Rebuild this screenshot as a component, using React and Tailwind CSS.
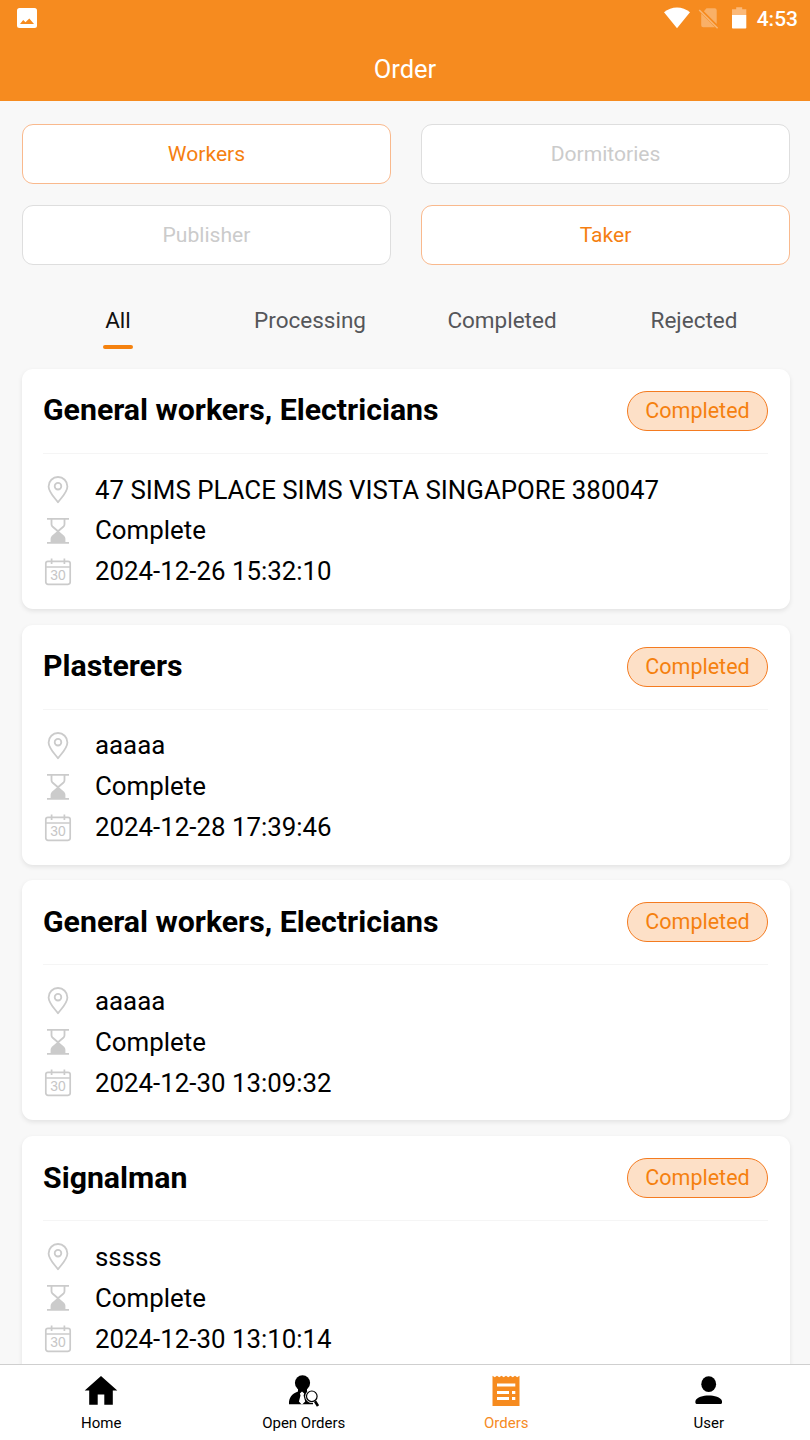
const orders = [
  { title: "General workers, Electricians", place: "47 SIMS PLACE SIMS VISTA SINGAPORE 380047", time: "2024-12-26 15:32:10" },
  { title: "Plasterers", place: "aaaaa", time: "2024-12-28 17:39:46" },
  { title: "General workers, Electricians", place: "aaaaa", time: "2024-12-30 13:09:32" },
  { title: "Signalman", place: "sssss", time: "2024-12-30 13:10:14" },
];

function StatusBar() {
  return (
    <div className="flex h-9 items-center justify-between pr-3 pl-[17px]">
      <svg className="h-5 w-5" viewBox="0 0 20 20">
        <rect width="20" height="20" rx="2.5" fill="#fff" />
        <path d="M3 16 6.2 12 8.5 14.2 12.3 10.4 17 16Z" fill="#f68b1f" />
      </svg>
      <div className="flex items-center">
        <svg className="h-[22px] w-[65px]" viewBox="0 0 65 22">
          <path d="M0 5.2C7.4-1.1 18.6-1.1 26 5.2L13 21.2Z" fill="#fff" />
          <path d="M42.5 1.2h8.2q2 0 2 2V17L39.9 4.2ZM37.2 6.4 51 20.2H39.2q-2 0-2-2Z" fill="#fff" fillOpacity=".32" />
          <path d="M35.2 3 53.6 21.2" stroke="#fff" strokeOpacity=".38" strokeWidth="1.5" />
        </svg>
        <svg className="ml-[3px] h-[22px] w-[15px]" viewBox="0 0 15 22">
          <path d="M4.2 0.2h6v2H14.3V8H0V2.2h4.2Z" fill="#fbb979" />
          <path d="M0 8h14.3v12.8q0 .8-.8.8H.8q-.8 0-.8-.8Z" fill="#fff" />
        </svg>
        <span className="mt-px ml-[10px] text-[21px] leading-6 font-medium text-white">4:53</span>
      </div>
    </div>
  );
}

function Choice({ label, active }) {
  return (
    <button
      className={
        "flex h-[60px] items-center justify-center rounded-[11px] border bg-white text-[21.1px] leading-[58px] " +
        (active ? "border-[#f9b98d] text-[#f57f11]" : "border-[#dedede] text-[#cbcbcb]")
      }
    >
      {label}
    </button>
  );
}

function PinIcon() {
  return (
    <svg className="ml-px h-7 w-7" viewBox="0 0 28 28" fill="none" stroke="#cbcbcb" strokeWidth="1.8">
      <path d="M14 26.3C12.2 23.5 4.6 16.4 4.6 10.4a9.4 9.4 0 0 1 18.8 0C23.4 16.4 15.8 23.5 14 26.3Z" strokeLinejoin="round" />
      <circle cx="14" cy="10.2" r="3.3" />
    </svg>
  );
}

function HourglassIcon() {
  return (
    <svg className="ml-px h-7 w-7" viewBox="0 0 28 28" fill="none" stroke="#cbcbcb" strokeWidth="1.8">
      <path d="M3 1.9H25M3 25.9H25" />
      <path d="M7.5 2V7.3Q7.5 8.7 8.7 9.8L14 14.3 19.3 9.8Q20.5 8.7 20.5 7.3V2" />
      <path d="M14 13.5 19.8 18.5Q21.4 20 21.4 21.7V26H6.6V21.7Q6.6 20 8.2 18.5Z" fill="#cbcbcb" stroke="none" />
    </svg>
  );
}

function CalendarIcon() {
  return (
    <svg className="ml-px h-7 w-7" viewBox="0 0 28 28" fill="none" stroke="#cbcbcb" strokeWidth="1.7">
      <rect x="1.8" y="3.4" width="24.4" height="22.9" rx="2.2" />
      <path d="M1.8 9H26.2M7.6 0.6V6.1M20.4 0.6V6.1" />
      <text x="14" y="22.4" textAnchor="middle" fill="#c6c6c6" stroke="none" fontSize="13.8" fontFamily="Liberation Sans, sans-serif">30</text>
    </svg>
  );
}

function OrderCard({ order }) {
  return (
    <article className="h-[240px] shrink-0 rounded-[11px] bg-white pr-[22px] pl-[21px] shadow-[0_2px_5px_rgba(0,0,0,0.09)]">
      <div className="flex h-[85px] items-center justify-between border-b border-[#f5f5f5]">
        <h2 className="pb-px text-[30.25px] leading-9 font-bold">{order.title}</h2>
        <span className="flex h-10 w-[141px] items-center justify-center rounded-full border-[1.5px] border-[#f47b20] bg-[#fde0c7] text-[21.5px] leading-[38px] text-[#f5800f]">
          Completed
        </span>
      </div>
      <div className="mt-[15.75px] grid grid-cols-[52px_1fr] items-center text-[25.85px] leading-[40.9px]">
        <PinIcon /><p>{order.place}</p>
        <HourglassIcon /><p>Complete</p>
        <CalendarIcon /><p>{order.time}</p>
      </div>
    </article>
  );
}

function NavItem({ label, active, children }) {
  return (
    <a className={"flex flex-1 flex-col items-center pt-[10px] text-[15px] " + (active ? "text-[#f68b1f]" : "text-black")}>
      <svg className="h-9 w-9" viewBox="0 0 36 36">{children}</svg>
      <span className="mt-[2px] leading-5">{label}</span>
    </a>
  );
}

export default function App() {
  return (
    <div className="flex h-[1440px] w-[810px] flex-col overflow-hidden bg-[#f8f8f8] font-['Roboto',sans-serif] text-black">
      <header className="h-[101px] shrink-0 bg-[#f68b1f]">
        <StatusBar />
        <h1 className="pt-[17px] text-center text-[25.5px] leading-8 text-white">Order</h1>
      </header>
      <main className="flex min-h-0 flex-1 flex-col overflow-hidden pt-[22.5px] pr-5 pl-[22px]">
        <div className="grid grid-cols-2 gap-x-[30px] gap-y-[21.75px]">
          <Choice label="Workers" active />
          <Choice label="Dormitories" />
          <Choice label="Publisher" />
          <Choice label="Taker" active />
        </div>
        <nav className="mt-[38.5px] grid h-[65px] shrink-0 grid-cols-4 text-center text-[22.5px] leading-8 text-[#55565a]">
          <div className="flex flex-col items-center text-[#111]">
            All
            <span className="mt-[9px] h-1 w-[30px] rounded-full bg-[#f5820f]" />
          </div>
          <div>Processing</div>
          <div>Completed</div>
          <div>Rejected</div>
        </nav>
        <div className="flex flex-col gap-[15.75px]">
          {orders.map((order) => (
            <OrderCard key={order.time} order={order} />
          ))}
        </div>
      </main>
      <footer className="flex h-[76px] shrink-0 border-t-[1.5px] border-[#cfcfcf] bg-white">
        <NavItem label="Home">
          <path d="M18 0.9 34.3 15.5H29.8V29.7H21.3V19.5H14.7V29.7H6.2V15.5H1.7Z" />
        </NavItem>
        <NavItem label="Open Orders">
          <circle cx="16.5" cy="7.8" r="7.6" />
          <path d="M12 12H21V16.5L27 20V29.3H3C2.7 22.6 5.8 18.8 12 16.5Z" />
          <path d="M16 16.5 18.2 18.5 17.6 20.6 19.2 26.5 16.4 29.3H15.4L12.9 26.5 14.5 20.6 13.9 18.5Z" fill="#fff" />
          <circle cx="25.8" cy="21.3" r="6.6" fill="#fff" />
          <circle cx="25.8" cy="21.3" r="5.3" fill="#fff" stroke="#000" strokeWidth="1.2" />
          <path d="M29 26.3 32 31" stroke="#000" strokeWidth="2.6" />
        </NavItem>
        <NavItem label="Orders" active>
          <path d="M4.5 .8 6.8 2.3 9 .8 11.2 2.3 13.5 .8 15.7 2.3 18 .8 20.2 2.3 22.5 .8 24.7 2.3 27 .8 29.2 2.3 31.5 .8V31H4.5Z" fill="#f68b1f" />
          <path d="M9 10H27.3M9 17.5H21M24 17.5H27.3M9 23.5H21M24 23.5H27.3" stroke="#fff" strokeWidth="2.8" />
        </NavItem>
        <NavItem label="User">
          <ellipse cx="17.7" cy="9.2" rx="7.4" ry="7.9" />
          <path d="M4.4 27.6V26C5.7 22.2 12.2 20.6 17.7 20.6S29.7 22.2 31 26V27.6Q31 29 29.9 29H5.5Q4.4 29 4.4 27.6Z" />
        </NavItem>
      </footer>
    </div>
  );
}
